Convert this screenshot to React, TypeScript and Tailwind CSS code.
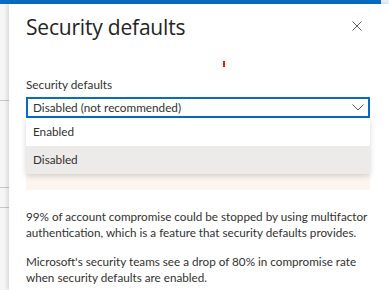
import React from "react";

export default function App() {
  const titleFont = { fontFamily: "'Open Sans', 'Noto Sans', sans-serif" };
  return (
    <div className="w-[389px] h-[290px] overflow-hidden bg-white flex flex-col text-[#323130]" style={{ fontFamily: "Lato, 'Noto Sans', sans-serif" }}>
      <div className="h-[4px] shrink-0 flex">
        <div className="flex-1 bg-[#0b6ac4]" />
        <div className="w-[8px] bg-[#e8eef5]" />
      </div>
      <div className="flex flex-1">
        <div className="w-[9px] shrink-0 bg-[#f6f6f6] flex flex-col">
          <div className="h-[96px]" />
          <div className="h-px bg-[#c8c8c8]" />
          <div className="h-[86px]" />
          <div className="h-px bg-[#c8c8c8]" />
          <div className="h-[19px]" />
          <div className="h-px bg-[#c8c8c8]" />
        </div>
        <div className="flex-1 bg-white pl-[17px] pr-[19px] shadow-[-2px_0_4px_rgba(0,0,0,0.12)] flex flex-col">
          <div className="flex items-start justify-between pt-[9px]">
            <div className="text-[21px] leading-[28px] tracking-[-0.2px] text-[#252423]" style={titleFont}>Security defaults</div>
            <svg width="10" height="10" viewBox="0 0 10 10" className="mt-[8px] mr-[8px]">
              <path d="M0.5 0.5 L9.5 9.5 M9.5 0.5 L0.5 9.5" stroke="#605e5c" strokeWidth="1" />
            </svg>
          </div>
          <div className="h-[26px] flex items-start">
            <div className="ml-[197px] mt-[20px] w-[2px] h-[6px] bg-[#ff1010]" />
          </div>
          <div className="mt-[11px] text-[11.75px] leading-[14px]">Security defaults</div>
          <div className="relative mt-[5px]">
            <div className="h-[21px] border-2 border-[#0b6ac4] flex items-center justify-between pl-[5px] pr-[4px] text-[11.75px]">
              <span>Disabled (not recommended)</span>
              <svg width="12" height="7" viewBox="0 0 12 7">
                <path d="M0.5 0.5 L6 6 L11.5 0.5" fill="none" stroke="#605e5c" strokeWidth="1" />
              </svg>
            </div>
            <div className="absolute left-0 right-0 top-full z-10 bg-white shadow-[0_2px_6px_rgba(0,0,0,0.16)] text-[11.75px]">
              <div className="h-[28px] flex items-center pl-[7px]">Enabled</div>
              <div className="h-[28px] flex items-center pl-[7px] bg-[#edebe9]">Disabled</div>
            </div>
          </div>
          <div className="mt-[8px] h-[64px] bg-[#fdf5ef]" />
          <div className="mt-[18px] text-[11.7px] leading-[16px]">
            <p>99% of account compromise could be stopped by using multifactor authentication, which is a feature that security defaults provides.</p>
            <p className="mt-[13px]">Microsoft's security teams see a drop of 80% in compromise rate when security defaults are enabled.</p>
          </div>
        </div>
      </div>
    </div>
  );
}
